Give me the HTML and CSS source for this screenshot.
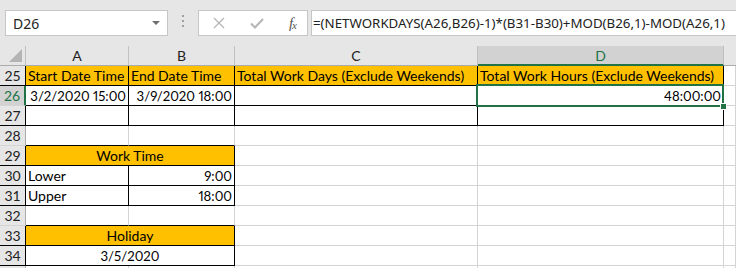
FILE: index.html
```html
<!DOCTYPE html>
<html lang="en">
  <head>
    <meta charset="UTF-8" />
    <meta name="viewport" content="width=device-width, initial-scale=1.0" />
    <title>Work Hours</title>
    <link rel="stylesheet" href="styles.css">
  </head>

  <body>
    <header class="formelbar">
      <div class="navnefelt">
        <span>D26</span>
        <svg class="pil" width="8" height="5" viewBox="0 0 8 5"><path d="M0 0H8L4 4Z" fill="#6f6f6f" /></svg>
      </div>
      <div class="prikker"><i></i><i></i><i></i></div>
      <div class="knapper">
        <svg width="12" height="12" viewBox="0 0 12 12"><path d="M1 1L11 11M11 1L1 11" stroke="#b5b5b5" stroke-width="1.3" fill="none" /></svg>
        <svg width="14" height="12" viewBox="0 0 14 12"><path d="M1 6.5L5 10.5L13 2" stroke="#b5b5b5" stroke-width="2" fill="none" /></svg>
        <span class="fx">f<sub>x</sub></span>
      </div>
      <div class="formel">=(NETWORKDAYS(A26,B26)-1)*(B31-B30)+MOD(B26,1)-MOD(A26,1)</div>
    </header>

    <section class="ark">
      <div class="hjorne"><svg width="13" height="13" viewBox="0 0 13 13"><path d="M13 0V13H0Z" fill="#b4b4b4" /></svg></div>
      <div class="kol">A</div>
      <div class="kol">B</div>
      <div class="kol">C</div>
      <div class="kol valgt">D</div>
      <div class="kol sidst"></div>

      <div class="nr sort">25</div>
      <div class="c guld sort">Start Date Time</div>
      <div class="c guld sort">End Date Time</div>
      <div class="c guld sort">Total Work Days (Exclude Weekends)</div>
      <div class="c guld sort">Total Work Hours (Exclude Weekends)</div>
      <div class="c"></div>

      <div class="nr valgt">26</div>
      <div class="c sort hojre tal">3/2/2020 15:00</div>
      <div class="c sort hojre tal">3/9/2020 18:00</div>
      <div class="c sort"></div>
      <div class="c sort hojre tal">48:00:00</div>
      <div class="c"></div>

      <div class="nr sort">27</div>
      <div class="c sort"></div>
      <div class="c sort"></div>
      <div class="c sort"></div>
      <div class="c sort"></div>
      <div class="c"></div>

      <div class="nr">28</div>
      <div class="c bund"></div>
      <div class="c bund"></div>
      <div class="c"></div>
      <div class="c"></div>
      <div class="c"></div>

      <div class="nr sort">29</div>
      <div class="c guld sort midt spand">Work Time</div>
      <div class="c"></div>
      <div class="c"></div>
      <div class="c"></div>

      <div class="nr sort">30</div>
      <div class="c sort">Lower</div>
      <div class="c sort hojre tal">9:00</div>
      <div class="c"></div>
      <div class="c"></div>
      <div class="c"></div>

      <div class="nr sort">31</div>
      <div class="c sort">Upper</div>
      <div class="c sort hojre tal">18:00</div>
      <div class="c"></div>
      <div class="c"></div>
      <div class="c"></div>

      <div class="nr">32</div>
      <div class="c bund"></div>
      <div class="c bund"></div>
      <div class="c"></div>
      <div class="c"></div>
      <div class="c"></div>

      <div class="nr sort">33</div>
      <div class="c guld sort midt spand">Holiday</div>
      <div class="c"></div>
      <div class="c"></div>
      <div class="c"></div>

      <div class="nr sort">34</div>
      <div class="c sort midt spand tal">3/5/2020</div>
      <div class="c"></div>
      <div class="c"></div>
      <div class="c"></div>

      <div class="nr rest"></div>
      <div class="c rest"></div>
      <div class="c rest"></div>
      <div class="c rest"></div>
      <div class="c rest"></div>
      <div class="c rest"></div>

      <div class="markering"><span></span></div>
    </section>
  </body>
</html>
```

FILE: styles.css
```css
body {
  margin: 0;
  padding: 0;
  height: 268px;
  background-color: #fff;
  overflow: hidden;
}

/* formelbar */

.formelbar {
  display: flex;
  align-items: flex-start;
  height: 46px;
  padding: 10px 0 0 5px;
  box-sizing: border-box;
  background-color: #e6e6e6;
  font-family: "Noto Sans", sans-serif;
  font-size: 13.3px;
  color: #222;
}

.navnefelt {
  display: flex;
  align-items: center;
  justify-content: space-between;
  width: 163px;
  height: 26px;
  box-sizing: border-box;
  padding: 0 7px 0 7px;
  background-color: #fff;
  border: 1px solid #c6c6c6;
  font-size: 14px;
}

.pil {
  margin-top: 1px;
}

.prikker {
  display: flex;
  flex-flow: column;
  gap: 3px;
  width: 30px;
  padding-top: 5px;
  align-items: center;
}

.prikker i {
  display: block;
  width: 2px;
  height: 2px;
  background-color: #a0a0a0;
}

.knapper {
  display: flex;
  align-items: center;
  justify-content: space-between;
  width: 110px;
  height: 26px;
  box-sizing: border-box;
  padding: 0 11px 0 14px;
  margin-right: 3px;
  background-color: #fff;
  border: 1px solid #c6c6c6;
}

.fx {
  font-family: "Liberation Serif", serif;
  font-style: italic;
  font-size: 15px;
  color: #555;
  letter-spacing: -1px;
}

.fx sub {
  font-size: 11px;
  vertical-align: 0;
  position: relative;
  top: 1px;
}

.formel {
  flex: 1;
  height: 26px;
  box-sizing: border-box;
  padding: 3px 0 0 1px;
  background-color: #fff;
  border: 1px solid #c6c6c6;
  border-right: none;
  white-space: nowrap;
  overflow: hidden;
}

/* regneark */

.ark {
  position: relative;
  display: grid;
  grid-template-columns: 26px 103px 106px 243px 246px 1fr;
  grid-template-rows: repeat(11, 20px) 2px;
  height: 222px;
  overflow: hidden;
  font-family: Lato, sans-serif;
  font-size: 14px;
  color: #000;
}

.ark > div {
  box-sizing: border-box;
  border-right: 1px solid #d4d4d4;
  border-bottom: 1px solid #d4d4d4;
}

.ark > .rest {
  border-bottom: none;
}

.hjorne {
  display: flex;
  align-items: flex-end;
  justify-content: flex-end;
  padding: 0 3px 3px 0;
  background-color: #e6e6e6;
}

.ark > .hjorne,
.ark > .kol {
  border-right-color: #c0c0c0;
  border-bottom-color: #ababab;
}

.kol {
  display: flex;
  align-items: center;
  justify-content: center;
  background-color: #e6e6e6;
  color: #222;
}

.ark > .kol.valgt {
  background-color: #d2d2d2;
  color: #217346;
  border-bottom: 2px solid #217346;
}

.ark > .kol.sidst {
  border-right: none;
}

.nr {
  display: flex;
  align-items: center;
  justify-content: center;
  background-color: #e6e6e6;
  color: #222;
}

.ark > .nr {
  border-right-color: #ababab;
}

.ark > .nr.valgt {
  background-color: #d2d2d2;
  color: #217346;
  border-right: 2px solid #217346;
}

.c {
  display: flex;
  align-items: flex-end;
  padding: 0 2px 1px 2px;
  white-space: nowrap;
}

.tal {
  font-size: 13.2px;
  font-variant-numeric: proportional-nums;
}

.ark > .sort {
  border-right-color: #000;
  border-bottom-color: #000;
}

.ark > .bund {
  border-bottom-color: #000;
}

.guld {
  background-color: #ffc000;
}

.hojre {
  justify-content: flex-end;
}

.midt {
  justify-content: center;
}

.spand {
  grid-column: span 2;
}

.ark > .markering {
  position: absolute;
  left: 476px;
  top: 38px;
  width: 248px;
  height: 23px;
  box-sizing: border-box;
  border: 2px solid #217346;
}

.markering span {
  position: absolute;
  right: -5px;
  bottom: -5px;
  width: 5px;
  height: 5px;
  background-color: #217346;
  border: 1px solid #fff;
}
```
